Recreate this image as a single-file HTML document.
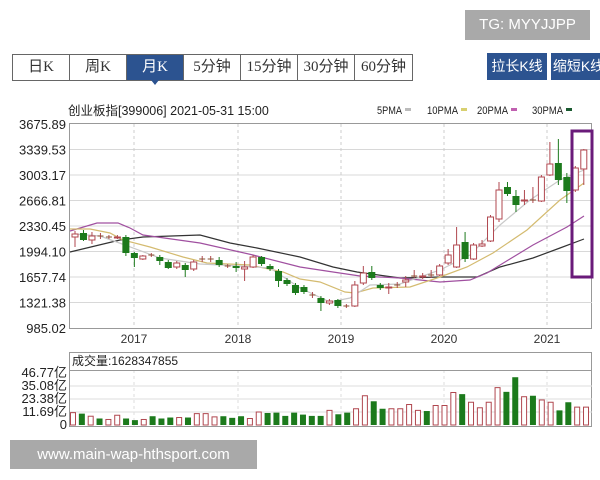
<!DOCTYPE html>
<html><head><meta charset="utf-8">
<style>
body{margin:0;width:600px;height:480px;background:#fff;position:relative;overflow:hidden;font-family:"Liberation Sans","Noto Sans CJK SC",sans-serif;}
.tg{position:absolute;left:465px;top:10px;width:125px;height:30px;background:#a9a9a9;color:#fff;font-size:15px;line-height:30px;text-align:center;}
.tabs{position:absolute;left:12px;top:54px;height:25px;display:flex;border:1px solid #666;}
.tabs div{height:25px;line-height:25px;text-align:center;font-size:15px;color:#333;border-right:1px solid #666;box-sizing:border-box;font-family:"Liberation Serif","Noto Sans CJK SC",serif;}
.tabs div:last-child{border-right:none}
.tabs .on{background:#2c5390;color:#fff;position:relative}
.tabs .on:after{content:"";position:absolute;left:24px;bottom:-5px;border-left:4px solid transparent;border-right:4px solid transparent;border-top:5px solid #2c5390;}
.btn{position:absolute;top:53px;height:27px;background:#2c5390;color:#fff;font-size:14px;line-height:27px;text-align:center;}
.wm{position:absolute;left:10px;top:440px;width:247px;height:29px;background:#a9a9a9;color:#fff;font-size:15px;line-height:29px;text-align:center;}
svg{position:absolute;left:0;top:0}
</style></head><body>
<div class="tg">TG: MYYJJPP</div>
<div class="tabs">
<div style="width:57px">日K</div><div style="width:57px">周K</div><div class="on" style="width:57px">月K</div><div style="width:57px">5分钟</div><div style="width:57px">15分钟</div><div style="width:57px">30分钟</div><div style="width:57px">60分钟</div>
</div>
<div class="btn" style="left:487px;width:60px">拉长K线</div>
<div class="btn" style="left:551px;width:55px">缩短K线</div>
<svg width="600" height="480" id="s" font-family="Liberation Sans, Noto Sans CJK SC, sans-serif">
<text x="68" y="115" font-size="12.5" fill="#222">创业板指[399006] 2021-05-31 15:00</text>
<g font-size="11" fill="#222">
<text x="377" y="114" textLength="25" lengthAdjust="spacingAndGlyphs">5PMA</text><rect x="405" y="108" width="6" height="3" fill="#bbb"/>
<text x="427" y="114" textLength="31" lengthAdjust="spacingAndGlyphs">10PMA</text><rect x="461" y="108" width="6" height="3" fill="#d8d070"/>
<text x="477" y="114" textLength="31" lengthAdjust="spacingAndGlyphs">20PMA</text><rect x="511" y="108" width="6" height="3" fill="#c060b0"/>
<text x="532" y="114" textLength="31" lengthAdjust="spacingAndGlyphs">30PMA</text><rect x="566" y="108" width="6" height="3" fill="#1a5a30"/>
</g>
<g id="grid"></g>
<g id="ma" fill="none" stroke-width="1.2">
<polyline stroke="#333" points="70,252 120,240 143,237 200,235 230,243 257,248 300,257 333,267 357,272 400,278 440,277 477,277 500,267 533,258 560,248 584,239"/>
<polyline stroke="#a050a0" points="70,231 97,223 118,223 130,228 143,235 200,243 253,255 300,267 333,272 360,276 400,278 440,282 470,280 487,273 533,245 567,227 584,216"/>
<polyline stroke="#d4bb70" points="70,229 90,229 110,233 123,240 150,247 183,257 207,263 250,265 283,272 300,279 320,282 345,292 355,293 373,288 410,287 440,277 467,267 493,253 527,230 560,200 584,183"/>
<polyline stroke="#c8c8c8" points="75,234 100,236 125,245 160,258 200,264 240,266 270,268 300,288 330,302 350,298 370,285 400,284 440,270 470,255 500,225 530,200 560,180 584,170"/>
</g>
<g id="c"></g>
<rect x="572" y="131" width="20" height="146" fill="none" stroke="#6a1b7a" stroke-width="3"/>
<g id="v"></g>
</svg>
<div class="wm">www.main-wap-hthsport.com</div>
<script>
var ns="http://www.w3.org/2000/svg";
function el(p,t,a){var e=document.createElementNS(ns,t);for(var k in a)e.setAttribute(k,a[k]);p.appendChild(e);return e;}
var g=document.getElementById('grid');
el(g,'rect',{x:69.5,y:123.5,width:522,height:205,fill:'none',stroke:'#999'});
var labs=["3675.89","3339.53","3003.17","2666.81","2330.45","1994.10","1657.74","1321.38","985.02"];
for(var i=0;i<9;i++){var y=124+i*25.5;
 if(i>0&&i<8)el(g,'line',{x1:70,x2:592,y1:y,y2:y,stroke:'#d8d8d8'});
 var t=el(g,'text',{x:66,y:y+5,'font-size':13,'text-anchor':'end',fill:'#222'});t.textContent=labs[i];}
var yrs=[[134,"2017"],[238,"2018"],[341,"2019"],[444,"2020"],[547,"2021"]];
yrs.forEach(function(a){el(g,'line',{x1:a[0],x2:a[0],y1:124,y2:328,stroke:'#ccc','stroke-dasharray':'3,3'});
 el(g,'line',{x1:a[0],x2:a[0],y1:370,y2:426,stroke:'#ddd','stroke-dasharray':'3,3'});
 var t=el(g,'text',{x:a[0],y:343,'font-size':12,'text-anchor':'middle',fill:'#333'});t.textContent=a[1];});
var C=[[234,237,231,247,'h'],[233,240,230,241,'g'],[236,240,232,244,'h'],[236,237,233,239,'c'],[237,238,235,239,'c'],[237,238,235,239,'h'],[237,253,235,256,'g'],[253,258,252,267,'g'],[256,259,255,260,'h'],[255,256,253,257,'c'],[257,261,255,265,'g'],[262,268,260,269,'g'],[263,267,261,269,'h'],[265,270,263,277,'g'],[262,269,260,271,'h'],[259,260,256,262,'c'],[259,260,256,262,'c'],[260,265,257,267,'g'],[266,267,264,268,'c'],[266,268,262,272,'g'],[267,269,261,281,'h'],[257,267,255,268,'h'],[257,264,256,266,'g'],[266,269,264,271,'g'],[271,281,269,287,'g'],[280,284,278,286,'g'],[285,293,283,295,'g'],[287,292,285,294,'g'],[295,296,292,298,'c'],[298,303,296,311,'g'],[301,303,299,305,'h'],[300,306,299,308,'g'],[306,307,304,308,'c'],[285,306,281,307,'h'],[273,283,266,285,'h'],[272,278,266,280,'g'],[285,288,283,290,'g'],[287,288,283,294,'h'],[285,286,282,288,'c'],[280,282,276,287,'h'],[276,277,270,278,'c'],[276,277,273,279,'h'],[275,276,270,278,'c'],[266,275,264,276,'h'],[255,263,249,265,'h'],[245,267,227,268,'h'],[242,259,232,262,'g'],[245,259,243,260,'h'],[244,246,240,247,'h'],[217,241,215,242,'h'],[190,219,182,222,'h'],[187,194,182,196,'g'],[196,205,190,212,'g'],[200,201,190,205,'h'],[200,201,187,203,'c'],[177,201,175,202,'h'],[164,175,142,176,'h'],[163,180,139,185,'g'],[177,191,173,203,'g'],[168,190,166,192,'h'],[150,169,149,185,'h']];
var cg=document.getElementById('c');
C.forEach(function(d,i){var x=75+8.48*i;var col=d[4]=='g'?'#1c7a1c':'#b0474f';
 el(cg,'line',{x1:x,x2:x,y1:d[2],y2:d[3],stroke:col});
 if(d[4]=='g')el(cg,'rect',{x:x-3.5,y:d[0],width:7,height:d[1]-d[0],fill:col});
 else if(d[4]=='c')el(cg,'line',{x1:x-3,x2:x+3,y1:d[0],y2:d[0],stroke:'#8a5030'});
 else el(cg,'rect',{x:x-3,y:d[0],width:6,height:Math.max(1,d[1]-d[0]),fill:'#fff',stroke:col});});
var v=document.getElementById('v');
el(v,'rect',{x:69.5,y:352.5,width:522,height:74,fill:'none',stroke:'#999'});
el(v,'line',{x1:70,x2:592,y1:370.5,y2:370.5,stroke:'#999'});
[386,399,412].forEach(function(y){el(v,'line',{x1:70,x2:592,y1:y,y2:y,stroke:'#ddd'});});
var t=el(v,'text',{x:72,y:365,'font-size':12,fill:'#222'});t.textContent="成交量:1628347855";
var vl=[["46.77亿",377],["35.08亿",390],["23.38亿",403],["11.69亿",416],["0",429]];
vl.forEach(function(a){var t=el(v,'text',{x:67,y:a[1],'font-size':13,'text-anchor':'end',fill:'#222'});t.textContent=a[0];});
var tops=[217,220,228,235,238,225,235,240,238,228,235,232,232,232,220,220,230,228,233,228,235,215,218,217,227,217,223,227,227,210,222,217,205,165,182,205,205,205,192,210,212,195,195,155,160,185,202,185,140,153,108,168,165,178,185,210,185,200,200];
var ty="hghghhgghggghghhhggghhggggggghgghhgghhhhghhhghhhhgghghhgghh";
tops.forEach(function(tp,i){var x=73+8.845*i;var h=(255-tp)*13/40;var y=425-h;
 if(ty[i]=='g')el(v,'rect',{x:x-3,y:y,width:6,height:h,fill:'#1c7a1c'});
 else el(v,'rect',{x:x-2.5,y:y,width:5,height:h,fill:'#fff',stroke:'#b0474f'});});
</script>
</body></html>
